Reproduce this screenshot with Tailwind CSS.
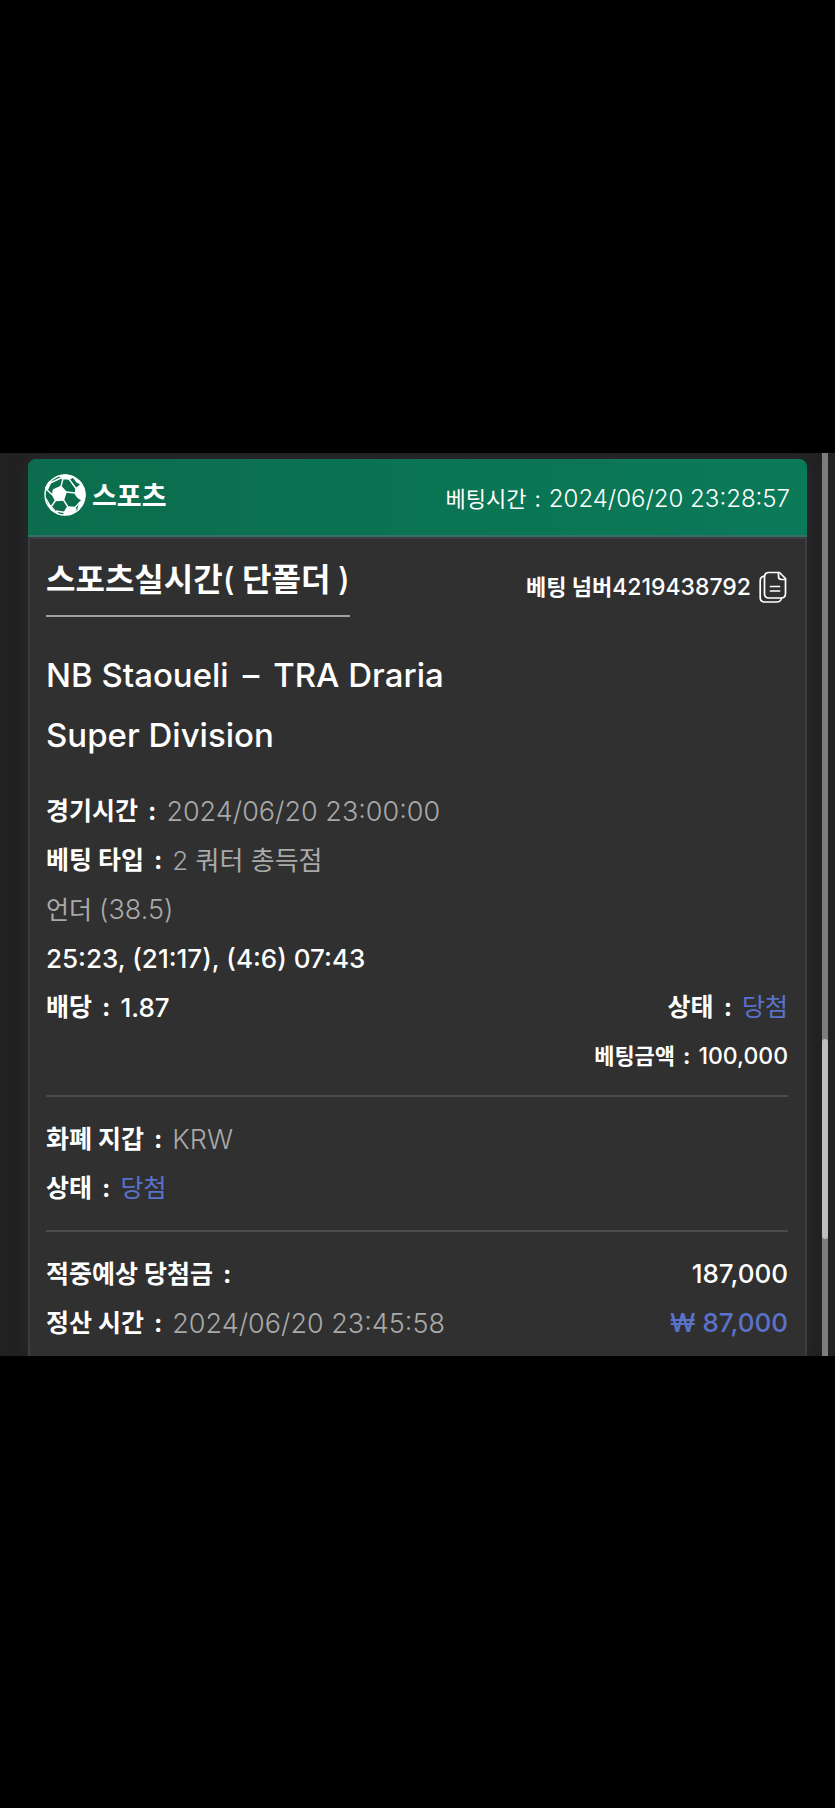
<!DOCTYPE html>
<html lang="ko">
<head>
<meta charset="utf-8">
<meta name="viewport" content="width=device-width, initial-scale=1">
<title>스포츠 베팅 내역</title>
<script src="https://cdn.jsdelivr.net/npm/@tailwindcss/browser@4"></script>
</head>
<body class="flex min-h-screen items-center bg-black font-['Inter','Noto_Sans_CJK_KR',sans-serif] text-white">
<main class="flex w-full overflow-hidden bg-[#212121] pr-[7px] pl-7">
  <article class="mt-1.5 min-w-0 flex-1 rounded-t-lg bg-[#303030] shadow-[0_0_16px_#2b2b33]">
    <header class="flex h-[78px] items-center justify-between rounded-t-lg border-b-2 border-[#35716b] bg-linear-to-r from-[#0b6d4d] to-[#0a7a58] pr-[17px] pl-4">
      <h1 class="flex items-center gap-1.5 pb-1 text-[27px] leading-10 font-bold">
        <svg class="size-[42px]" viewBox="0 0 42 42" fill="none" stroke="#fff" stroke-width="1.4" stroke-linejoin="round" aria-hidden="true">
          <circle cx="21" cy="21" r="20"/>
          <g fill="#fff">
            <path d="M9.500 16 17 12.500 22 18 19.500 26 11.500 26.500 8.500 21Z"/>
            <path d="M16 1.800 22 1 29 3 25 5 18 4.500Z"/>
            <path d="M32 14.500 37 10.500 40 15 41 22 39 27 34 23.500 31.500 20Z"/>
            <path d="M23.500 33 31 33.500 32 36 27 40 20 40.500 20.500 38Z"/>
            <path d="M1.500 14 5 8 6.500 9 3.500 15.500Z"/>
            <path d="M4 30 6.500 32 11 37 14 39.500 8 36Z"/>
            <path d="M30 4 36 8 38 11 33 8Z"/>
            <path d="M34 35 35.500 30 39 26 38 31Z"/>
          </g>
          <path d="M17 12.500 19 4.500M22 18 31.500 19M19.500 26 24 33M11.500 26.500 7 33M8.500 21 2 15M32 14.500 25 5M6 9 17 4M31 33.500 37 27M21 38.500 12 37M1.500 24 7 33"/>
        </svg>
        <span class="pt-1">스포츠</span>
      </h1>
      <p class="flex items-baseline gap-2 pt-1 text-[22px] leading-8"><span>베팅시간</span><span>:</span><time class="text-2xl font-light" datetime="2024-06-20T23:28:57">2024/06/20 23:28:57</time></p>
    </header>
    <div class="border-x-2 border-t-2 border-[#3c3d41] pr-[17px] pb-2 pl-4">
      <div class="flex items-start justify-between pt-4">
        <h2 class="border-b-2 border-[#a0a0a0] pb-2.5 text-[32px] leading-[50px] font-bold">스포츠실시간<span class="font-medium">(</span> 단폴더 <span class="font-medium">)</span></h2>
        <div class="flex items-center gap-2 pt-3.5 pr-px text-[22px] leading-9 font-medium">
          <span><span class="font-bold">베팅 넘버</span><span class="text-[23px]">4219438792</span></span>
          <button type="button" aria-label="베팅 넘버 복사">
            <svg class="block h-8 w-7" viewBox="0 0 28 32" fill="none" stroke="#fff" stroke-width="1.700" stroke-linecap="round" stroke-linejoin="round" aria-hidden="true">
              <path d="M10 1.500H20.500L26.500 7.500V22.500Q26.500 27 22 27H10Q5.500 27 5.500 22.500V6Q5.500 1.500 10 1.500Z"/>
              <path d="M19.500 1.500V5.500Q19.500 8.500 22.500 8.500H26.500M5.500 5Q1.200 5.500 1.200 10V26.500Q1.200 31 5.700 31H17.500Q22 31 22.500 27M11.500 15.500H20.500M11.500 20H20.500"/>
            </svg>
          </button>
        </div>
      </div>
      <div class="mt-7 text-[33px] leading-[60px] font-medium">
        <h3 class="flex gap-3.5"><span>NB Staoueli</span><span>–</span><span>TRA Draria</span></h3>
        <p>Super Division</p>
      </div>
      <section class="mt-[22px] border-b-2 border-[#4b4b4b] pb-3.5 text-[25px] leading-[49px] font-bold">
        <p class="flex gap-2.5"><span>경기시간</span><span>:</span><span class="text-[27px] font-light text-[#a9a9a9]">2024/06/20 23:00:00</span></p>
        <p class="flex gap-2.5"><span>베팅 타입</span><span>:</span><span class="text-[26px] font-normal text-[#a9a9a9]"><span class="font-light">2</span> 쿼터 총득점</span></p>
        <p class="font-normal text-[#a9a9a9]">언더 <span class="text-[27px] font-light">(38.5)</span></p>
        <p class="text-[26px] leading-[48px] font-medium">25:23, (21:17), (4:6) 07:43</p>
        <div class="flex justify-between"><p class="flex gap-2.5"><span>배당</span><span>:</span><span class="text-[26px] font-medium">1.87</span></p><p class="flex gap-2.5"><span>상태</span><span>:</span><span class="font-normal text-[#5b72cb]">당첨</span></p></div>
        <p class="flex justify-end gap-2 text-[22px]"><span>베팅금액</span><span>:</span><span class="text-[23px] font-medium">100,000</span></p>
      </section>
      <section class="border-b-2 border-[#4b4b4b] pt-[18px] pb-[17px] text-[25px] leading-[49px] font-bold">
        <p class="flex gap-2.5"><span>화폐 지갑</span><span>:</span><span class="text-[27px] font-light text-[#a9a9a9]">KRW</span></p>
        <p class="flex gap-2.5"><span>상태</span><span>:</span><span class="font-normal text-[#5b72cb]">당첨</span></p>
      </section>
      <section class="pt-[18px] text-[25px] leading-[49px] font-bold">
        <div class="flex justify-between"><p class="flex gap-2.5"><span>적중예상 당첨금</span><span>:</span></p><p class="text-[26px] leading-[48px] font-medium">187,000</p></div>
        <div class="flex justify-between"><p class="flex gap-2.5"><span>정산 시간</span><span>:</span><span class="text-[27px] font-light text-[#a9a9a9]">2024/06/20 23:45:58</span></p><p class="text-[26px] leading-[48px] font-medium text-[#5b72cb]">₩ 87,000</p></div>
      </section>
    </div>
  </article>
  <div class="relative ml-[15px] w-1.5 bg-[#7d7d7d]" aria-hidden="true">
    <div class="absolute inset-x-0 top-[65%] h-[200px] rounded-full bg-[#bebebe]"></div>
  </div>
</main>
</body>
</html>
